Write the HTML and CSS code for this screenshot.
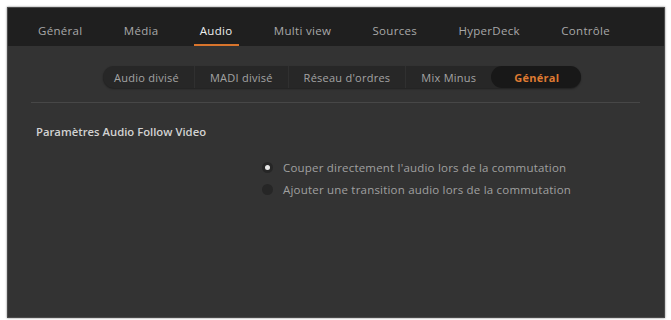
FILE: index.html
```html
<!DOCTYPE html>
<html lang="fr">
  <head>
    <meta charset="UTF-8" />
    <title>Paramètres Audio</title>
    <link rel="stylesheet" href="styles.css">
  </head>
  <body>
    <div class="panel">
      <div class="onglets">
        <span class="onglet">Général</span>
        <span class="onglet">Média</span>
        <span class="onglet actif">Audio</span>
        <span class="onglet">Multi view</span>
        <span class="onglet">Sources</span>
        <span class="onglet">HyperDeck</span>
        <span class="onglet">Contrôle</span>
      </div>

      <div class="contenu">
        <div class="sous-onglets">
          <span class="segment">Audio divisé</span>
          <span class="segment">MADI divisé</span>
          <span class="segment">Réseau d'ordres</span>
          <span class="segment">Mix Minus</span>
          <span class="segment actif">Général</span>
        </div>

        <div class="separateur"></div>

        <h3 class="titre">Paramètres Audio Follow Video</h3>

        <div class="options">
          <label class="option"><span class="radio coche"></span>Couper directement l'audio lors de la commutation</label>
          <label class="option"><span class="radio"></span>Ajouter une transition audio lors de la commutation</label>
        </div>
      </div>
    </div>
  </body>
</html>
```

FILE: styles.css
```css
body {
  margin: 0;
  padding: 7px 6px 2px 7px;
  background-color: #fff;
  font-family: "Open Sans", "Liberation Sans", sans-serif;
  font-size: 11px;
}

.panel {
  height: 309px;
  background-color: #333;
  border: 1px solid #4a4a4a;
  box-shadow: 0 0 2px rgba(0, 0, 0, 0.5);
  display: flex;
  flex-direction: column;
}

.onglets {
  height: 38px;
  background-color: #1f1f1f;
  display: flex;
  justify-content: space-between;
  padding: 0 54px 0 30px;
}

.onglet {
  color: #a8a8a8;
  font-size: 11.5px;
  letter-spacing: 0.3px;
  position: relative;
  display: flex;
  align-items: center;
  padding-top: 6px;
}

.onglet.actif {
  color: #eee;
}

.onglet.actif::after {
  content: "";
  position: absolute;
  left: -6px;
  right: -7px;
  bottom: 0;
  height: 2px;
  background-color: #d8742c;
}

.contenu {
  flex: 1;
  display: flex;
  flex-direction: column;
}

.sous-onglets {
  align-self: flex-start;
  margin: 20px 0 0 95px;
  height: 22px;
  display: flex;
  background-color: #272727;
  border-radius: 11px;
  box-shadow: 0 1px 2px rgba(0, 0, 0, 0.4);
}

.segment {
  color: #a4a4a4;
  letter-spacing: 0.25px;
  display: flex;
  align-items: center;
  padding: 0 15px;
  border-right: 1px solid #303030;
}

.segment:first-child {
  padding-left: 11px;
}

.segment:nth-child(4) {
  border-right: none;
}

.segment.actif {
  border-right: none;
  background-color: #181818;
  color: #de7a32;
  font-weight: bold;
  border-radius: 11px;
  padding: 0 22px 0 23px;
}

.separateur {
  height: 1px;
  margin: 14px 24px 0 23px;
  background-color: #474747;
}

.titre {
  margin: 21px 0 0 28px;
  font-size: 11.3px;
  font-weight: 600;
  color: #d2d2d2;
}

.options {
  margin: 21px 0 0 254px;
  display: flex;
  flex-direction: column;
  gap: 7px;
}

.option {
  display: flex;
  align-items: center;
  gap: 10px;
  color: #a0a0a0;
  font-size: 11.5px;
  letter-spacing: 0.2px;
}

.radio {
  width: 11px;
  height: 11px;
  border-radius: 50%;
  background-color: #262626;
  display: flex;
  align-items: center;
  justify-content: center;
}

.radio.coche::after {
  content: "";
  width: 5px;
  height: 5px;
  border-radius: 50%;
  background-color: #e8e8e8;
}
```
